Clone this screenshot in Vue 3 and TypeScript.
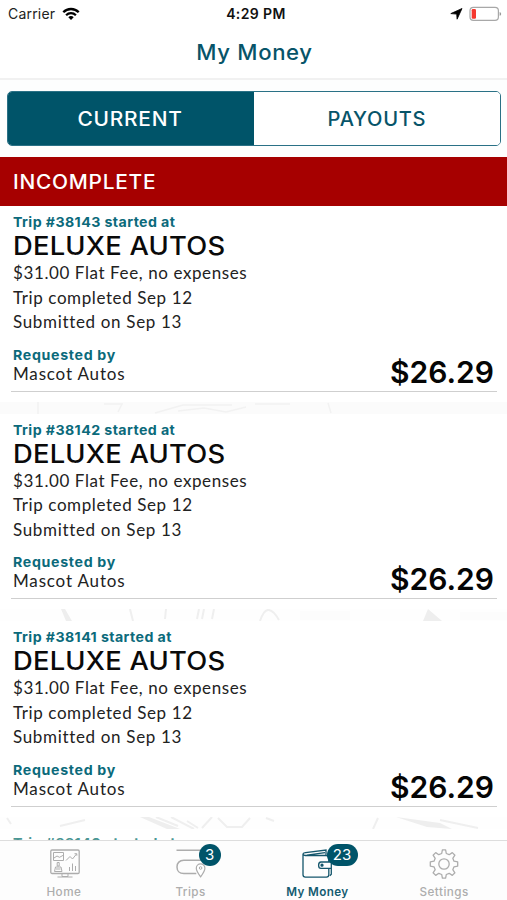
<script setup lang="ts">
interface Trip {
  id: number
  place: string
  fee: string
  completed: string
  submitted: string
  requester: string
  amount: string
}

const trips: Trip[] = [38143, 38142, 38141].map((id) => ({
  id,
  place: 'DELUXE AUTOS',
  fee: '$31.00 Flat Fee, no expenses',
  completed: 'Trip completed Sep 12',
  submitted: 'Submitted on Sep 13',
  requester: 'Mascot Autos',
  amount: '$26.29',
}))

const nextTripId = 38140
</script>

<template>
  <div class="screen">
    <header class="top">
      <div class="status">
        <div class="carrier">
          <span class="carrier-name">Carrier</span>
          <svg width="18" height="14" viewBox="0 0 18 14">
            <path d="M1.3 5.3C5.5.9 12.5.9 16.7 5.3" fill="none" stroke="#000" stroke-width="2.3" />
            <path d="M4.1 8.2c2.7-2.8 7.1-2.8 9.8 0" fill="none" stroke="#000" stroke-width="2.2" />
            <path d="M6.3 10.2c1.5-1.5 3.9-1.5 5.4 0L9 13z" fill="#000" />
          </svg>
        </div>
        <span class="time">4:29 PM</span>
        <div class="power">
          <svg width="13" height="12" viewBox="0 0 13 12">
            <path d="M12 .5 7.1 11.2 6.7 6.1.8 5.6z" fill="#000" stroke="#000" stroke-width=".8" />
          </svg>
          <svg width="33" height="16" viewBox="0 0 33 16">
            <rect x="1" y="1.4" width="28.4" height="13" rx="3.4" fill="#fff" stroke="#a8a8a8" stroke-width="1.2" />
            <rect x="2.7" y="3" width="4.3" height="9.8" rx="1.2" fill="#f5382f" />
            <path d="M30.6 6q1.6.4 1.6 1.9t-1.6 1.9z" fill="#999" />
          </svg>
        </div>
      </div>
      <h1 class="title">My Money</h1>
    </header>

    <div class="switch-area">
      <div class="switch">
        <button class="seg active"><span class="current">CURRENT</span></button>
        <button class="seg"><span class="payouts">PAYOUTS</span></button>
      </div>
    </div>

    <h2 class="section"><span>INCOMPLETE</span></h2>

    <main class="list">
      <template v-for="(trip, i) in trips" :key="trip.id">
        <article class="card">
          <p class="label">Trip #{{ trip.id }} started at</p>
          <h3 class="place">{{ trip.place }}</h3>
          <p class="detail">{{ trip.fee }}</p>
          <p class="detail">{{ trip.completed }}</p>
          <p class="detail submitted">{{ trip.submitted }}</p>
          <div class="bottom">
            <div>
              <p class="label requested">Requested by</p>
              <p class="requester">{{ trip.requester }}</p>
            </div>
            <strong class="amount">{{ trip.amount }}</strong>
          </div>
        </article>
        <svg class="strip" width="507" height="12" viewBox="0 0 507 12">
          <g v-if="i === 0" fill="none" stroke="#f2f2f2" stroke-width="1.5">
            <path d="M0 0h507v12H0z" fill="#fbfbfb" stroke="none" />
            <path d="M38 0v12M104 2h18l-4 8M155 11l28-8h49M178 9l26-3 22 4 20-5M255 2h35M328 1l3 10" />
          </g>
          <g v-else-if="i === 1" fill="none" stroke="#efefef" stroke-width="2">
            <path d="m61 0 4 0 7 12h-6zM423 12l5-12 14 12z" fill="#eeeeee" stroke="none" />
            <path d="m130 0 3 12M166 0l-1 10M199 0l-2 10M204 0l-2 10M214 0l-2 10M260 12q4-12 9-11t10 10" />
            <path d="M300 2h50v9h-50zM460 3h47v8h-47z" fill="#fcfcfc" stroke="none" />
          </g>
          <g v-else fill="none" stroke="#efefef" stroke-width="2">
            <path d="m140 0 27 12h13L149 0zM396 0l44 6 12 6-25-2z" fill="#eeeeee" stroke="none" />
            <path d="m7 1 4 6M60 9l25-6M156 0l22 9M171 0l23 12M187 4l11 7M202 11l10-11M218 1l9 9h15l8-9M266 1l8 3M378 1l-5 11M440 3l38 8" />
          </g>
        </svg>
      </template>
      <article class="card next">
        <p class="label">Trip #{{ nextTripId }} started at</p>
      </article>
    </main>

    <nav class="tabs">
      <a class="tab">
        <svg class="home-icon" width="30" height="30" viewBox="0 0 30 30" fill="none" stroke="#adadad" stroke-width="1">
          <rect x=".8" y="1" width="28.4" height="23.5" rx="1.2" stroke-width="1.3" />
          <path d="M3.5 3.5h10v8h-10zM4 9l3-2 2.5 1.3 3.7-2M16 11.5l4-4 2.5 2.5 4-5M24.5 4.7h2.3v2M19.5 22v-4M22.5 22v-7.5M25.5 22v-5" />
          <path d="M7.2 13.5h2v3.5h-2zM5.5 18h5.5l1 4.5H4.5zM6 20h4.5M12 24.5v3h6v-3M7.5 28h15" />
        </svg>
        <span class="tab-label">Home</span>
      </a>
      <a class="tab">
        <svg class="trips-icon" width="30" height="30" viewBox="0 0 30 30" fill="none" stroke="#adadad" stroke-width="1.5">
          <path d="M.5 1.3H27M27 11.3H7.8C3.5 11.3 1 14 1 17.9s2.5 6.7 6.8 6.7h12.5" />
          <path d="M24.6 27.8q-4.3-5.8-4.3-8.6a4.3 4.3 0 0 1 8.6 0q0 2.8-4.3 8.6z" fill="#fff" stroke-width="1.2" />
          <circle cx="24.6" cy="19" r="1.3" stroke-width="1" />
        </svg>
        <b class="badge one">3</b>
        <span class="tab-label">Trips</span>
      </a>
      <a class="tab selected">
        <svg class="money-icon" width="30" height="30" viewBox="0 0 30 30" fill="none" stroke="#14566c" stroke-width="1.3">
          <path d="M3.2 6.5Q1 6.2 1 5q0-1 2.5-1.4L24 1v5.5M5 6.2l18-2.6M1 5v20.8q0 2.4 2.4 2.4h21q2.4 0 2.4-2.4v-6.3M26.8 13V9q0-2.5-2.5-2.5H3" />
          <path d="M29.3 9.5v15.8l-1.5 1.5M29.3 13H19q-2.4 0-2.4 3.2t2.4 3.2h10.3" />
          <circle cx="20" cy="16.2" r="1" fill="#14566c" />
        </svg>
        <b class="badge two">23</b>
        <span class="tab-label">My Money</span>
      </a>
      <a class="tab">
        <svg width="30" height="30" viewBox="0 0 30 30" fill="none" stroke="#adadad" stroke-width="1.3">
          <circle cx="15" cy="15" r="5.2" />
          <path d="M13.4.8h3.2l.7 3.7 2.9 1.2 3.1-2.1 2.6 2.6-2.1 3.1 1.2 2.9 3.7.7v4.2l-3.7.7-1.2 2.9 2.1 3.1-2.6 2.6-3.1-2.1-2.9 1.2-.7 3.7h-3.2l-.7-3.7-2.9-1.2-3.1 2.1-2.6-2.6 2.1-3.1L5 17.8l-3.7-.7v-4.2l3.7-.7 1.2-2.9-2.1-3.1 2.6-2.6 3.1 2.1 2.9-1.2z" stroke-linejoin="round" />
        </svg>
        <span class="tab-label">Settings</span>
      </a>
    </nav>
  </div>
</template>

<style>
body {
  margin: 0;
  background: #fff;
}
</style>

<style scoped>
.screen {
  width: 507px;
  height: 900px;
  display: flex;
  flex-direction: column;
  overflow: hidden;
  background: #fdfefe;
  color: #111;
  font-family: Inter, 'Liberation Sans', sans-serif;
  white-space: nowrap;
}

h1, h2, h3, p {
  margin: 0;
  font-weight: 500;
}

.top {
  height: 78px;
  flex: none;
  background: #fff;
  border-bottom: 2px solid #f1f1f1;
}

.status {
  height: 27px;
  display: grid;
  grid-template-columns: 1fr auto 1fr;
  align-items: center;
  padding: 0 5px 0 8px;
}

.carrier {
  display: flex;
  align-items: center;
  gap: 7px;
  color: #222;
}

.carrier-name { font-size: 14px; letter-spacing: 0.2px; }

.time {
  padding-left: 2px;
  font-size: 14px;
  font-weight: 600;
  letter-spacing: 0.4px;
}

.power {
  display: flex;
  justify-content: flex-end;
  align-items: center;
  gap: 6px;
}

.title {
  height: 50px;
  line-height: 51px;
  padding-left: 2px;
  text-align: center;
  color: #075469;
  font-size: 21px;
  letter-spacing: 0.6px;
  transform: scaleX(1.055);
}

.switch-area {
  flex: none;
  height: 55px;
  padding: 11px 6px 11px 7px;
}

.switch {
  box-sizing: border-box;
  height: 55px;
  display: grid;
  grid-template-columns: 1fr 1fr;
  border: 1px solid #2a7186;
  border-radius: 5px;
  overflow: hidden;
}

.seg {
  border: 0;
  padding: 0;
  background: #fff;
  color: #075469;
  font: 500 19.5px Inter, sans-serif;
  letter-spacing: 0.7px;
}

.seg span { display: inline-block; }
.current { transform: scaleX(1.07); }
.payouts { transform: scaleX(1.03); }

.seg.active {
  padding-right: 2px;
  background: #005469;
  color: #fff;
}

.section {
  flex: none;
  box-sizing: border-box;
  height: 49px;
  line-height: 50px;
  padding-left: 13px;
  background: #a60000;
  color: #fff;
  font-size: 19.5px;
  letter-spacing: 0.7px;
}

.section span {
  display: inline-block;
  transform: scaleX(1.07);
  transform-origin: left;
}

.list {
  flex: 1;
  min-height: 0;
  overflow: hidden;
}

.card {
  box-sizing: border-box;
  height: 195.7px;
  padding: 7px 10px 0 11px;
  background: #fff;
}

.card p, .place { padding-left: 2px; }

.next { height: 30px; padding-top: 5px; }
.next .label { color: #4b9693; }

.strip { display: block; background: #fefefe; }

.label {
  color: #0b6a7b;
  font-weight: 700;
  font-size: 13.5px;
  line-height: 18px;
  letter-spacing: 0.4px;
  transform: scaleX(1.05);
  transform-origin: 2px 50%;
}

.bottom .requested { letter-spacing: 0.65px; }

.place {
  height: 30px;
  line-height: 31px;
  font-size: 25px;
  color: #0a0a0a;
  letter-spacing: 0.2px;
  transform: scaleX(1.094);
  transform-origin: 2px 50%;
}

.detail {
  height: 24.5px;
  line-height: 24.5px;
  font-family: Lato, sans-serif;
  font-weight: 400;
  font-size: 17px;
  color: #222;
  letter-spacing: 0.6px;
}

.submitted { letter-spacing: 0.67px; }

.bottom {
  display: flex;
  justify-content: space-between;
  margin-top: 11px;
  height: 45px;
  border-bottom: 1.5px solid #cfcfcf;
}

.requester {
  font-family: Lato, sans-serif;
  font-weight: 400;
  font-size: 17px;
  line-height: 20px;
  letter-spacing: 0.83px;
  color: #222;
}

.amount {
  margin-right: 3px;
  font-weight: 600;
  font-size: 30px;
  line-height: 52px;
  color: #050505;
}

.tabs {
  flex: none;
  box-sizing: border-box;
  height: 60px;
  display: grid;
  grid-template-columns: repeat(4, 1fr);
  border-top: 1px solid #ddd;
  background: #fdfdfd;
}

.tab {
  position: relative;
  display: flex;
  flex-direction: column;
  align-items: center;
  padding-top: 8px;
  color: #adadad;
}

.tab svg { flex: none; }
.home-icon { margin-left: 3px; }
.trips-icon, .money-icon { margin-left: 1px; }

.tab-label {
  margin-top: 5px;
  padding-left: 1px;
  line-height: 16px;
  font-size: 11.7px;
  font-weight: 500;
  letter-spacing: 0.45px;
}

.selected .tab-label {
  color: #145b71;
  font-weight: 600;
  letter-spacing: 0.35px;
}

.badge {
  position: absolute;
  top: 3px;
  height: 22px;
  line-height: 22px;
  border-radius: 11px;
  background: #005469;
  color: #fff;
  font-size: 15px;
  font-weight: 400;
  text-align: center;
}

.one { left: 72px; width: 22px; }
.two { left: 73px; width: 31px; }
</style>
